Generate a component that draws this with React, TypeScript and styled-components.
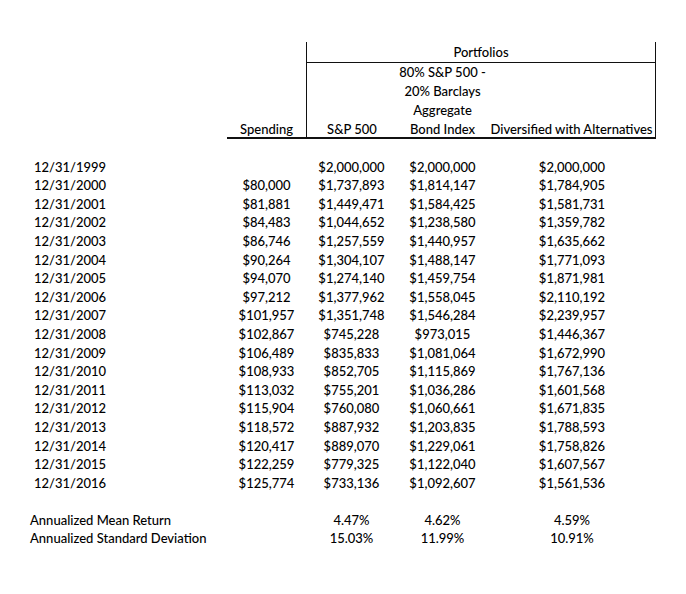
import React from "react";
import styled, { createGlobalStyle } from "styled-components";

const Global = createGlobalStyle`
  html, body { margin: 0; padding: 0; background: #ffffff; }
  body { font-family: Lato, "Open Sans", sans-serif; color: #000; }
`;

const COLS = "197px 79px 91px 91px 168px";
const ROW = 18.6;

const Page = styled.div`
  width: 686px;
  height: 594px;
  box-sizing: border-box;
  padding: 42px 0 0 30px;
  font-size: 13px;
  font-weight: 500;
`;

const Grid = styled.div`
  display: grid;
  grid-template-columns: ${COLS};
`;

const PortfoliosCell = styled.div`
  grid-column: 3 / 6;
  height: 20px;
  border-left: 1px solid #111;
  border-right: 1px solid #111;
  border-bottom: 1px solid #111;
  text-align: center;
  line-height: 20px;
`;

const HeadBlank = styled.div<{ $span?: number }>`
  grid-column: span ${(p) => p.$span ?? 1};
`;

const HeadRow = styled.div`
  grid-column: 2 / 6;
  display: grid;
  grid-template-columns: 79px 91px 91px 168px;
  border-bottom: 2px solid #111;
  height: 74px;
`;

const HeadCell = styled.div<{ $left?: boolean; $right?: boolean }>`
  display: flex;
  flex-direction: column;
  justify-content: flex-end;
  align-items: center;
  text-align: center;
  line-height: 19px;
  white-space: nowrap;
  border-left: ${(p) => (p.$left ? "1px solid #111" : "none")};
  border-right: ${(p) => (p.$right ? "1px solid #111" : "none")};
`;

const Body = styled.div`
  display: grid;
  grid-template-columns: ${COLS};
  margin-top: 18.6px;
  line-height: ${ROW}px;
`;

const Cell = styled.div<{ $align?: "left" | "center" }>`
  text-align: ${(p) => p.$align ?? "center"};
  white-space: nowrap;
  height: ${ROW}px;
`;

const DateCell = styled(Cell)`
  padding-left: 4px;
`;

const Summary = styled.div`
  display: grid;
  grid-template-columns: ${COLS};
  margin-top: ${ROW}px;
  line-height: ${ROW}px;
`;

const rows: [string, string, string, string, string][] = [
  ["12/31/1999", "", "$2,000,000", "$2,000,000", "$2,000,000"],
  ["12/31/2000", "$80,000", "$1,737,893", "$1,814,147", "$1,784,905"],
  ["12/31/2001", "$81,881", "$1,449,471", "$1,584,425", "$1,581,731"],
  ["12/31/2002", "$84,483", "$1,044,652", "$1,238,580", "$1,359,782"],
  ["12/31/2003", "$86,746", "$1,257,559", "$1,440,957", "$1,635,662"],
  ["12/31/2004", "$90,264", "$1,304,107", "$1,488,147", "$1,771,093"],
  ["12/31/2005", "$94,070", "$1,274,140", "$1,459,754", "$1,871,981"],
  ["12/31/2006", "$97,212", "$1,377,962", "$1,558,045", "$2,110,192"],
  ["12/31/2007", "$101,957", "$1,351,748", "$1,546,284", "$2,239,957"],
  ["12/31/2008", "$102,867", "$745,228", "$973,015", "$1,446,367"],
  ["12/31/2009", "$106,489", "$835,833", "$1,081,064", "$1,672,990"],
  ["12/31/2010", "$108,933", "$852,705", "$1,115,869", "$1,767,136"],
  ["12/31/2011", "$113,032", "$755,201", "$1,036,286", "$1,601,568"],
  ["12/31/2012", "$115,904", "$760,080", "$1,060,661", "$1,671,835"],
  ["12/31/2013", "$118,572", "$887,932", "$1,203,835", "$1,788,593"],
  ["12/31/2014", "$120,417", "$889,070", "$1,229,061", "$1,758,826"],
  ["12/31/2015", "$122,259", "$779,325", "$1,122,040", "$1,607,567"],
  ["12/31/2016", "$125,774", "$733,136", "$1,092,607", "$1,561,536"],
];

const stats: [string, string, string, string][] = [
  ["Annualized Mean Return", "4.47%", "4.62%", "4.59%"],
  ["Annualized Standard Deviation", "15.03%", "11.99%", "10.91%"],
];

export default function App() {
  return (
    <Page>
      <Global />
      <Grid>
        <HeadBlank $span={2} />
        <PortfoliosCell>Portfolios</PortfoliosCell>
        <HeadBlank />
        <HeadRow>
          <HeadCell>Spending</HeadCell>
          <HeadCell $left>S&amp;P 500</HeadCell>
          <HeadCell>
            <span>80% S&amp;P 500 -</span>
            <span>20% Barclays</span>
            <span>Aggregate</span>
            <span>Bond Index</span>
          </HeadCell>
          <HeadCell $right>Diversified with Alternatives</HeadCell>
        </HeadRow>
      </Grid>
      <Body>
        {rows.map((r) => (
          <React.Fragment key={r[0]}>
            <DateCell $align="left">{r[0]}</DateCell>
            <Cell>{r[1]}</Cell>
            <Cell>{r[2]}</Cell>
            <Cell>{r[3]}</Cell>
            <Cell>{r[4]}</Cell>
          </React.Fragment>
        ))}
      </Body>
      <Summary>
        {stats.map((s) => (
          <React.Fragment key={s[0]}>
            <Cell $align="left">{s[0]}</Cell>
            <Cell />
            <Cell>{s[1]}</Cell>
            <Cell>{s[2]}</Cell>
            <Cell>{s[3]}</Cell>
          </React.Fragment>
        ))}
      </Summary>
    </Page>
  );
}
